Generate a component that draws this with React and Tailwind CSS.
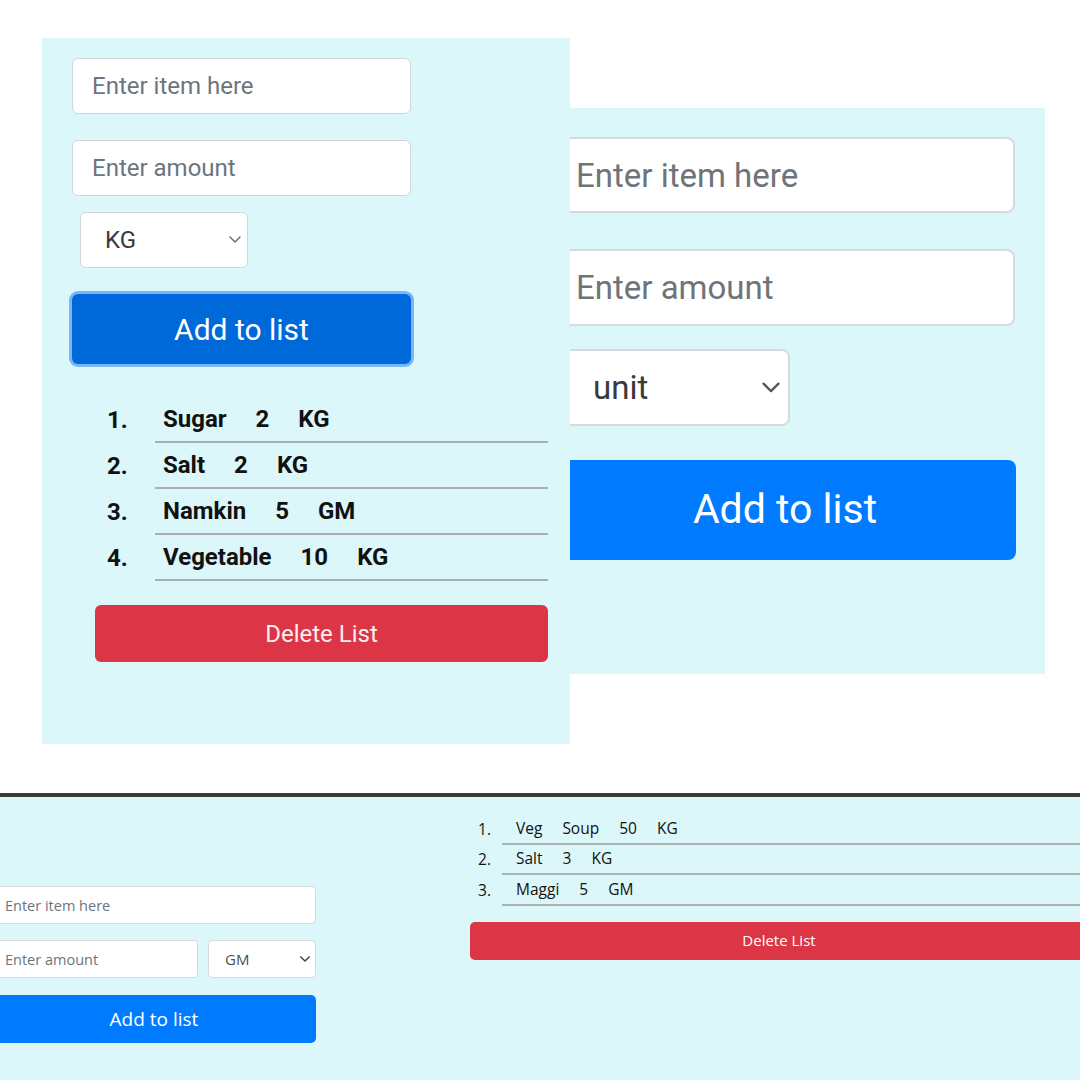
import React from "react";

const Chevron = ({ size = 12, stroke = "#555", sw = 1.6 }) => (
  <svg width={size} height={size * 0.6} viewBox="0 0 12 7" fill="none">
    <path d="M1 1l5 5 5-5" stroke={stroke} strokeWidth={sw} strokeLinecap="round" strokeLinejoin="round" />
  </svg>
);

const roboto = { fontFamily: "Roboto, 'Liberation Sans', sans-serif" };
const segoe = { fontFamily: "'Open Sans', 'Noto Sans', sans-serif" };

function Panel1() {
  const items = [
    ["Sugar", "2", "KG"],
    ["Salt", "2", "KG"],
    ["Namkin", "5", "GM"],
    ["Vegetable", "10", "KG"],
  ];
  return (
    <div className="w-[528px] h-[706px] shrink-0 bg-[#dcf7f9] pt-[20px] flex flex-col" style={roboto}>
      <input
        placeholder="Enter item here"
        className="ml-[30px] w-[339px] h-[56px] rounded-[6px] border border-[#cfd5d9] bg-white px-[19px] text-[24px] text-[#333] placeholder:text-[#6c757d] outline-none"
        style={roboto}
      />
      <input
        placeholder="Enter amount"
        className="mt-[26px] ml-[30px] w-[339px] h-[56px] rounded-[6px] border border-[#cfd5d9] bg-white px-[19px] text-[24px] text-[#333] placeholder:text-[#6c757d] outline-none"
        style={roboto}
      />
      <div className="mt-[16px] ml-[38px] w-[168px] h-[56px] rounded-[6px] border border-[#cfd5d9] bg-white flex items-center justify-between pl-[24px] pr-[6px] text-[24px] text-[#3a3a3a]">
        <span>KG</span>
        <Chevron size={12} stroke="#666" sw={1.4} />
      </div>
      <button className="mt-[26px] ml-[30px] w-[339px] h-[70px] rounded-[6px] bg-[#0069d9] ring-[3px] ring-[#77b7f6] text-white text-[30px] flex items-center justify-center">
        Add to list
      </button>
      <ol className="mt-[33px] flex flex-col">
        {items.map((it, i) => (
          <li key={i} className="flex items-center">
            <span className="ml-[65px] w-[48px] text-[24px] font-bold text-[#111]">{i + 1}.</span>
            <div className="flex-1 mr-[22px] h-[46px] border-b-2 border-[#a6afb3] flex items-center pl-[8px] gap-[29px] text-[24px] font-bold text-[#111]">
              {it.map((t, j) => (
                <span key={j}>{t}</span>
              ))}
            </div>
          </li>
        ))}
      </ol>
      <button className="mt-[24px] ml-[53px] w-[453px] h-[57px] rounded-[6px] bg-[#dc3545] text-[#fbeef0] text-[24px] flex items-center justify-center">
        Delete List
      </button>
    </div>
  );
}

function Panel2() {
  return (
    <div className="mt-[70px] w-[475px] h-[566px] shrink-0 bg-[#dcf7f9] pt-[29px] flex flex-col overflow-hidden" style={roboto}>
      <input
        placeholder="Enter item here"
        className="ml-[-16px] w-[461px] h-[76px] shrink-0 rounded-[8px] border-2 border-[#d6dadd] bg-white pl-[20px] text-[33px] text-[#333] placeholder:text-[#6f7478] outline-none"
        style={roboto}
      />
      <input
        placeholder="Enter amount"
        className="mt-[36px] ml-[-16px] w-[461px] h-[77px] shrink-0 rounded-[8px] border-2 border-[#d6dadd] bg-white pl-[20px] text-[33px] text-[#333] placeholder:text-[#6f7478] outline-none"
        style={roboto}
      />
      <div className="mt-[23px] ml-[-16px] w-[236px] h-[77px] shrink-0 rounded-[8px] border-2 border-[#d6dadd] bg-white flex items-center justify-between pl-[37px] pr-[8px] text-[33px] text-[#3a3a3a]">
        <span>unit</span>
        <Chevron size={18} stroke="#555" sw={1.5} />
      </div>
      <button className="mt-[34px] ml-[-16px] w-[462px] h-[100px] shrink-0 rounded-[8px] bg-[#007bff] text-white text-[41px] flex items-center justify-center">
        Add to list
      </button>
    </div>
  );
}

function Panel3() {
  const items = [
    ["Veg", "Soup", "50", "KG"],
    ["Salt", "3", "KG"],
    ["Maggi", "5", "GM"],
  ];
  return (
    <div className="h-[287px] border-t-4 border-[#3a3a3a] bg-[#dcf7f9] flex overflow-hidden" style={segoe}>
      <div className="w-[316px] shrink-0 pt-[89px] flex flex-col">
        <input
          placeholder="Enter item here"
          className="ml-[-8px] w-[324px] h-[38px] rounded-[4px] border border-[#d6dadd] bg-white pl-[12px] text-[14.5px] text-[#333] placeholder:text-[#6c757d] outline-none"
          style={segoe}
        />
        <div className="mt-[16px] ml-[-8px] flex gap-[10px]">
          <input
            placeholder="Enter amount"
            className="w-[206px] h-[38px] rounded-[4px] border border-[#d6dadd] bg-white pl-[12px] text-[14.5px] text-[#333] placeholder:text-[#6c757d] outline-none"
            style={segoe}
          />
          <div className="w-[108px] h-[38px] rounded-[4px] border border-[#d6dadd] bg-white flex items-center justify-between pl-[16px] pr-[5px] text-[15px] text-[#495057]">
            <span>GM</span>
            <Chevron size={10} stroke="#444" sw={1.8} />
          </div>
        </div>
        <button className="mt-[17px] ml-[-8px] w-[324px] h-[48px] rounded-[5px] bg-[#007bff] text-white text-[19px] flex items-center justify-center">
          Add to list
        </button>
      </div>
      <div className="ml-[154px] flex-1 pt-[17px] flex flex-col">
        <ol className="flex flex-col">
          {items.map((it, i) => (
            <li key={i} className="flex items-center">
              <span className="ml-[8px] w-[24px] text-[15.5px] text-[#111]">{i + 1}.</span>
              <div className="flex-1 h-[30.5px] border-b-2 border-[#aab2b5] flex items-center pl-[14px] gap-[20px] text-[15.5px] text-[#111]">
                {it.map((t, j) => (
                  <span key={j}>{t}</span>
                ))}
              </div>
            </li>
          ))}
        </ol>
        <button className="mt-[16px] mr-[-8px] h-[38px] rounded-[5px] bg-[#dc3545] text-white text-[15px] flex items-center justify-center">
          Delete List
        </button>
      </div>
    </div>
  );
}

export default function App() {
  return (
    <div className="w-[1080px] h-[1080px] bg-white overflow-hidden flex flex-col">
      <div className="h-[793px] shrink-0 flex items-start pl-[42px] pt-[38px]">
        <Panel1 />
        <Panel2 />
      </div>
      <Panel3 />
    </div>
  );
}
